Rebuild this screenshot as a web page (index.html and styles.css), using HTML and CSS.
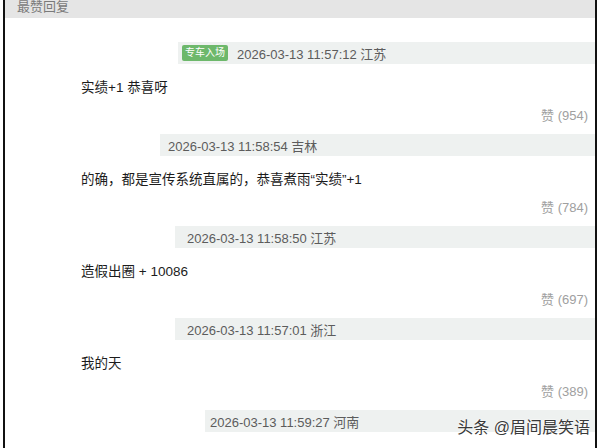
FILE: index.html
```html
<!DOCTYPE html>
<html lang="zh-CN">
<head>
    <meta charset="UTF-8">
    <meta name="viewport" content="width=device-width, initial-scale=1.0">
    <title>最赞回复</title>
    <link rel="stylesheet" href="styles.css">
</head>
<body>
    <div class="frame">
        <div class="head">最赞回复</div>

        <div class="list">
            <div class="reply">
                <div class="meta row-a">
                    <span class="badge">专车入场</span>
                    <span class="date">2026-03-13 11:57:12 江苏</span>
                </div>
                <p class="text">实绩+1 恭喜呀</p>
                <div class="like">赞 (954)</div>
            </div>

            <div class="reply">
                <div class="meta row-b">
                    <span class="date">2026-03-13 11:58:54 吉林</span>
                </div>
                <p class="text">的确，都是宣传系统直属的，恭喜煮雨“实绩”+1</p>
                <div class="like">赞 (784)</div>
            </div>

            <div class="reply">
                <div class="meta row-c">
                    <span class="date">2026-03-13 11:58:50 江苏</span>
                </div>
                <p class="text">造假出圈 + 10086</p>
                <div class="like">赞 (697)</div>
            </div>

            <div class="reply">
                <div class="meta row-c">
                    <span class="date">2026-03-13 11:57:01 浙江</span>
                </div>
                <p class="text">我的天</p>
                <div class="like">赞 (389)</div>
            </div>

            <div class="reply">
                <div class="meta row-d">
                    <span class="date">2026-03-13 11:59:27 河南</span>
                </div>
            </div>
        </div>

        <div class="mark">头条 @眉间晨笑语</div>
    </div>
</body>
</html>
```

FILE: styles.css
```css
html, body {
    margin: 0;
    padding: 0;
    background: #fff;
    overflow: hidden;
}
body {
    font-family: "Liberation Sans", Arial, "Noto Sans CJK SC", sans-serif;
    width: 600px;
    height: 448px;
}
.frame {
    position: relative;
    margin-left: 3px;
    width: 590px;
    height: 448px;
    border-left: 2px solid #111;
    border-right: 2px solid #111;
    overflow: hidden;
}
.head {
    height: 18px;
    background: #e5e5e5;
    color: #7a7a7a;
    font-size: 13px;
    line-height: 14px;
    padding-left: 12px;
}
.list {
    padding-top: 24px;
}
.reply {
    display: flex;
    flex-direction: column;
}
.meta {
    display: flex;
    align-items: center;
    height: 22px;
    background: #eef1f0;
    color: #5c5c5c;
    font-size: 13px;
}
.row-a { margin-left: 173px; padding-left: 4px; }
.row-b { margin-left: 155px; padding-left: 8px; }
.row-c { margin-left: 170px; padding-left: 12px; }
.row-d { margin-left: 200px; padding-left: 5px; }
.badge {
    background: #6db86b;
    color: #fff;
    font-size: 10px;
    line-height: 16px;
    height: 16px;
    padding: 0 3px;
    border-radius: 2px;
    margin-right: 9px;
}
.text {
    margin: 14px 0 0;
    padding-left: 76px;
    font-size: 13.5px;
    line-height: 20px;
    color: #1c1c1c;
}
.like {
    margin: 10px 0 10px;
    padding-right: 7px;
    text-align: right;
    font-size: 13px;
    line-height: 16px;
    color: #a0a0a0;
}
.mark {
    position: absolute;
    right: 5px;
    top: 418px;
    font-size: 16px;
    line-height: 20px;
    color: #3a3a3a;
    text-shadow: 0 0 2px #fff, 0 0 2px #fff;
}
```
